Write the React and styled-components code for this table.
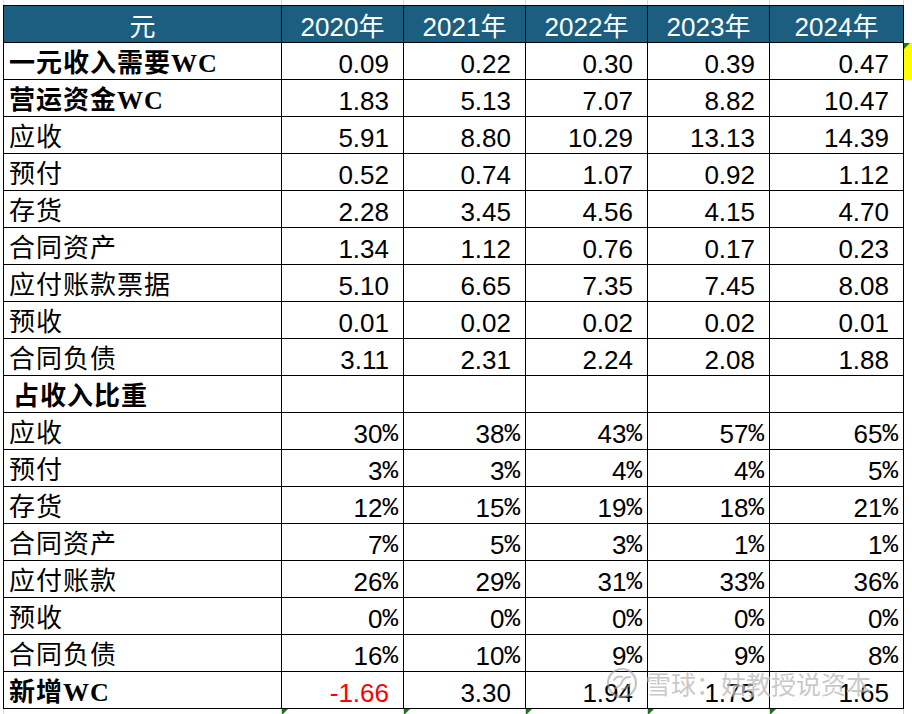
import React from "react";
import styled, { createGlobalStyle, css } from "styled-components";

const GlobalStyle = createGlobalStyle`
  html, body { margin: 0; padding: 0; background: #ffffff; }
  body { overflow: hidden; }
`;

const COLS = "279px 122px 122px 122px 122px 134px 1fr";

const Sheet = styled.div`
  position: relative;
  width: 912px;
  height: 714px;
  padding-left: 3px;
  box-sizing: border-box;
  display: flex;
  flex-direction: column;
  overflow: hidden;
  background: #fff;
`;

const Row = styled.div`
  display: grid;
  grid-template-columns: ${COLS};
  height: ${(p) => p.$h}px;
  flex: none;
`;

const GridStub = styled.div`
  position: relative;
  box-sizing: border-box;
  border-right: 1px solid #d9d9d9;
  ${(p) => p.$first && css`border-left: 1px solid #d9d9d9;`}
  ${(p) =>
    p.$marker &&
    css`
      &::before {
        content: "";
        position: absolute;
        left: 0;
        top: 0;
        border-top: 6px solid #147a14;
        border-right: 6px solid transparent;
      }
    `}
`;

const cellBase = css`
  box-sizing: border-box;
  display: flex;
  align-items: flex-end;
  border-right: 1px solid #000;
  border-bottom: 1px solid #000;
  line-height: 30px;
  font-size: 26px;
  white-space: nowrap;
  overflow: hidden;
`;

const HeadCell = styled.div`
  ${cellBase};
  border-top: 1px solid #000;
  ${(p) => p.$first && css`border-left: 1px solid #000;`}
  justify-content: center;
  background: #1b5e80;
  color: #ffffff;
  font-family: "Liberation Sans", "Noto Sans CJK SC", sans-serif;
`;

const LabelCell = styled.div`
  ${cellBase};
  border-left: 1px solid #000;
  justify-content: flex-start;
  padding-left: ${(p) => (p.$indent ? 9 : 5)}px;
  color: #000;
  font-family: "Liberation Serif", "Noto Sans CJK SC", serif;
  font-weight: ${(p) => (p.$bold ? 700 : 400)};
  letter-spacing: 1px;
`;

const ValueCell = styled.div`
  ${cellBase};
  justify-content: flex-end;
  padding-right: ${(p) => (p.$pct ? 6 : 14)}px;
  color: ${(p) => (p.$neg ? "#ff0000" : "#000")};
  font-family: "Liberation Sans", "Noto Sans CJK SC", sans-serif;
`;

const Pct = styled.span`
  font-family: "Liberation Mono", monospace;
  letter-spacing: -1px;
`;

const Gutter = styled.div`
  position: relative;
  box-sizing: border-box;
  border-bottom: 1px solid ${(p) => (p.$line ? "#e3e3e3" : "transparent")};
  background: ${(p) => (p.$flag ? "#ffff00" : "transparent")};
  ${(p) =>
    p.$flag &&
    css`
      &::before {
        content: "";
        position: absolute;
        left: 0;
        top: 0;
        border-top: 6px solid #147a14;
        border-right: 6px solid transparent;
      }
    `}
`;

const Watermark = styled.div`
  position: absolute;
  left: 606px;
  top: 667px;
  display: flex;
  align-items: center;
  gap: 8px;
  pointer-events: none;
  opacity: 0.75;
`;

const WatermarkText = styled.span`
  font-family: "Noto Sans CJK SC", sans-serif;
  font-size: 25px;
  line-height: 32px;
  color: rgba(170, 170, 170, 0.85);
  text-shadow: 0 0 1px #ffffff, 0 0 2px #ffffff;
  letter-spacing: 0px;
`;

const years = ["2020年", "2021年", "2022年", "2023年", "2024年"];

const rows = [
  { label: "一元收入需要WC", bold: true, vals: ["0.09", "0.22", "0.30", "0.39", "0.47"], flag: true },
  { label: "营运资金WC", bold: true, vals: ["1.83", "5.13", "7.07", "8.82", "10.47"] },
  { label: "应收", vals: ["5.91", "8.80", "10.29", "13.13", "14.39"] },
  { label: "预付", vals: ["0.52", "0.74", "1.07", "0.92", "1.12"] },
  { label: "存货", vals: ["2.28", "3.45", "4.56", "4.15", "4.70"] },
  { label: "合同资产", vals: ["1.34", "1.12", "0.76", "0.17", "0.23"] },
  { label: "应付账款票据", vals: ["5.10", "6.65", "7.35", "7.45", "8.08"] },
  { label: "预收", vals: ["0.01", "0.02", "0.02", "0.02", "0.01"] },
  { label: "合同负债", vals: ["3.11", "2.31", "2.24", "2.08", "1.88"] },
  { label: "占收入比重", bold: true, indent: true, vals: ["", "", "", "", ""] },
  { label: "应收", pct: true, vals: ["30", "38", "43", "57", "65"] },
  { label: "预付", pct: true, vals: ["3", "3", "4", "4", "5"] },
  { label: "存货", pct: true, vals: ["12", "15", "19", "18", "21"] },
  { label: "合同资产", pct: true, vals: ["7", "5", "3", "1", "1"] },
  { label: "应付账款", pct: true, vals: ["26", "29", "31", "33", "36"] },
  { label: "预收", pct: true, vals: ["0", "0", "0", "0", "0"] },
  { label: "合同负债", pct: true, vals: ["16", "10", "9", "9", "8"] },
  { label: "新增WC", bold: true, vals: ["-1.66", "3.30", "1.94", "1.75", "1.65"] },
];

function XueqiuLogo() {
  return (
    <svg width="32" height="32" viewBox="0 0 32 32" fill="none">
      <circle cx="16" cy="16" r="14" stroke="rgba(160,160,160,0.8)" strokeWidth="2.2" />
      <path
        d="M9 21c3-1 6-3 7-6s4-5 8-5"
        stroke="rgba(160,160,160,0.8)"
        strokeWidth="2.2"
        strokeLinecap="round"
      />
      <path
        d="M8 13c2-3 5-4 8-3M16 22c3 0 6-2 8-5"
        stroke="rgba(160,160,160,0.8)"
        strokeWidth="2"
        strokeLinecap="round"
      />
    </svg>
  );
}

export default function App() {
  return (
    <>
      <GlobalStyle />
      <Sheet>
        <Row $h={5}>
          <GridStub $first />
          <GridStub />
          <GridStub />
          <GridStub />
          <GridStub />
          <GridStub />
          <div />
        </Row>
        <Row $h={38}>
          <HeadCell $first>元</HeadCell>
          {years.map((y) => (
            <HeadCell key={y}>{y}</HeadCell>
          ))}
          <div />
        </Row>
        {rows.map((r, i) => (
          <Row $h={37} key={i}>
            <LabelCell $bold={r.bold} $indent={r.indent}>
              {r.label}
            </LabelCell>
            {r.vals.map((v, j) => (
              <ValueCell key={j} $pct={r.pct} $neg={v.startsWith("-")}>
                {v}
                {r.pct && v !== "" ? <Pct>%</Pct> : null}
              </ValueCell>
            ))}
            <Gutter $flag={r.flag} />
          </Row>
        ))}
        <Row $h={5}>
          <GridStub $first />
          <GridStub $marker />
          <GridStub $marker />
          <GridStub $marker />
          <GridStub $marker />
          <GridStub $marker />
          <div />
        </Row>
        <Watermark>
          <XueqiuLogo />
          <WatermarkText>雪球：姑教授说资本</WatermarkText>
        </Watermark>
      </Sheet>
    </>
  );
}
